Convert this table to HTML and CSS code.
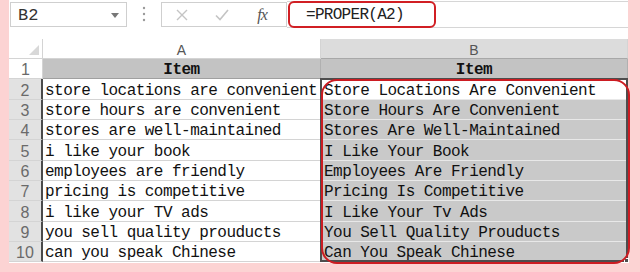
FILE: index.html
```html
<!DOCTYPE html>
<html>
<head>
<meta charset="utf-8">
<link rel="stylesheet" href="styles.css">
</head>
<body>
<div class="app">
  <div class="fbar">
    <div class="namebox"><span class="ref">B2</span><span class="caret"></span></div>
    <div class="sep">
      <svg width="4" height="16" viewBox="0 0 4 16"><circle cx="2" cy="2" r="1.2" fill="#9a9a9a"/><circle cx="2" cy="8" r="1.2" fill="#9a9a9a"/><circle cx="2" cy="14" r="1.2" fill="#9a9a9a"/></svg>
    </div>
    <div class="fnbox">
      <span class="ico"><svg width="12" height="12" viewBox="0 0 12 12"><path d="M1 1 L11 11 M11 1 L1 11" stroke="#c4c4c4" stroke-width="1.4" fill="none"/></svg></span>
      <span class="ico"><svg width="14" height="12" viewBox="0 0 14 12"><path d="M1 6.5 L5 10.5 L13 1" stroke="#c4c4c4" stroke-width="1.6" fill="none"/></svg></span>
      <span class="ico fx">fx</span>
    </div>
    <div class="finput">
      <div class="fring">=PROPER(A2)</div>
    </div>
  </div>
  <div class="sheet">
    <div class="corner"><span class="tri"></span></div>
    <div class="colh">A</div>
    <div class="colh sel">B</div>

    <div class="rh first">1</div>
    <div class="hd">Item</div>
    <div class="hd">Item</div>

    <div class="rh">2</div><div class="ca">store locations are convenient</div><div class="cb active">Store Locations Are Convenient</div>
    <div class="rh">3</div><div class="ca">store hours are convenient</div><div class="cb">Store Hours Are Convenient</div>
    <div class="rh">4</div><div class="ca">stores are well-maintained</div><div class="cb">Stores Are Well-Maintained</div>
    <div class="rh">5</div><div class="ca">i like your book</div><div class="cb">I Like Your Book</div>
    <div class="rh">6</div><div class="ca">employees are friendly</div><div class="cb">Employees Are Friendly</div>
    <div class="rh">7</div><div class="ca">pricing is competitive</div><div class="cb">Pricing Is Competitive</div>
    <div class="rh">8</div><div class="ca">i like your TV ads</div><div class="cb">I Like Your Tv Ads</div>
    <div class="rh">9</div><div class="ca">you sell quality prouducts</div><div class="cb">You Sell Quality Prouducts</div>
    <div class="rh">10</div><div class="ca">can you speak Chinese</div><div class="cb">Can You Speak Chinese</div>

    <div class="selbox"><span class="handle"></span></div>
    <div class="ring"></div>
  </div>
</div>
</body>
</html>
```
FILE: styles.css
```css
* { box-sizing: border-box; }
html, body { margin: 0; padding: 0; }
body {
  width: 640px;
  height: 272px;
  background: #fcd3d3;
  overflow: hidden;
  font-family: "Liberation Mono", monospace;
}
.app {
  margin-left: 9px;
  width: 619px;
  height: 263px;
  background: #ffffff;
}
.fbar {
  display: flex;
  align-items: flex-start;
  height: 28px;
}
.namebox {
  margin: 2px 0 0 1px;
  width: 117px;
  height: 25px;
  border: 1px solid #cfcfcf;
  display: flex;
  align-items: center;
  justify-content: space-between;
  padding: 0 7px 0 7px;
}
.ref {
  font-size: 17px;
  color: #333;
  padding-top: 1px;
}
.caret {
  width: 0;
  height: 0;
  border-left: 4px solid transparent;
  border-right: 4px solid transparent;
  border-top: 5px solid #777;
  margin-top: 1px;
}
.sep {
  width: 34px;
  height: 28px;
  display: flex;
  align-items: center;
  justify-content: center;
}
.fnbox {
  margin-top: 2px;
  width: 126px;
  height: 25px;
  border: 1px solid #cfcfcf;
  display: grid;
  grid-template-columns: 40px 40px 40px;
  align-items: center;
}
.ico {
  display: flex;
  justify-content: center;
  align-items: center;
  height: 23px;
}
.fx {
  font-family: "Liberation Serif", serif;
  font-style: italic;
  font-size: 16px;
  color: #555;
  letter-spacing: -1px;
}
.finput {
  flex: 1;
  height: 27px;
  margin-top: 1px;
  border-top: 1px solid #d6d6d6;
  border-bottom: 1px solid #d6d6d6;
  position: relative;
}
.fring {
  position: absolute;
  left: 1px;
  top: -1px;
  width: 148px;
  height: 27px;
  border: 2px solid #d11f24;
  border-radius: 6px;
  padding-left: 16px;
  padding-top: 1px;
  font-size: 16px;
  letter-spacing: -0.7px;
  line-height: 23px;
  color: #222;
}
.sheet {
  margin-top: 11px;
  position: relative;
  display: grid;
  grid-template-columns: 34px 278px 307px;
  grid-template-rows: 20px 20px 21px 20px 20px 21px 20px 20px 21px 20px 20px;
  font-size: 16px;
  letter-spacing: -0.53px;
  color: #111;
}
.sheet > div {
  border-right: 1px solid #d4d4d4;
  border-bottom: 1px solid #d4d4d4;
  white-space: nowrap;
  overflow: hidden;
  display: flex;
  align-items: center;
  padding-top: 3px;
}
.corner {
  position: relative;
  background: #fff;
}
.tri {
  position: absolute;
  right: 3px;
  bottom: 3px;
  width: 0;
  height: 0;
  border-left: 10px solid transparent;
  border-bottom: 10px solid #d8d8d8;
}
.colh {
  justify-content: center;
  font-family: "Liberation Sans", sans-serif;
  font-size: 14px;
  letter-spacing: 0;
  color: #555;
  background: #fff;
}
.colh.sel {
  background: #dcdcdc;
  border-bottom-color: #a8a8a8 !important;
}
.rh {
  justify-content: center;
  font-family: "Liberation Sans", sans-serif;
  font-size: 16px;
  letter-spacing: 0;
  color: #6a6a6a;
  background: #e2e2e2;
  border-right: 2px solid #4a4a4a !important;
}
.rh.first {
  background: #fff;
  border-right: 1px solid #d4d4d4 !important;
}
.hd {
  justify-content: center;
  background: #c3c3c3;
  font-weight: bold;
  color: #111;
  border-right-color: #b0b0b0 !important;
  border-bottom-color: #a0a0a0 !important;
}
.ca {
  padding-left: 2px;
  background: #fff;
}
.cb {
  padding-left: 3px;
  background: #c9c9c9;
  border-bottom-color: #e8e8e8 !important;
}
.cb.active {
  background: #fff;
}
.selbox {
  position: absolute;
  left: 311px;
  top: 39px;
  width: 308px;
  height: 184px;
  border: 2px solid #4d4d4d !important;
  background: transparent;
  pointer-events: none;
  overflow: visible !important;
  padding: 0 !important;
}
.handle {
  position: absolute;
  right: -3px;
  bottom: -3px;
  width: 5px;
  height: 5px;
  background: #4d4d4d;
  border: 1px solid #fff;
}
.ring {
  position: absolute;
  left: 312px;
  top: 40px;
  width: 309px;
  height: 185px;
  border: 2px solid #cc1c22 !important;
  border-radius: 16px;
  background: transparent;
  padding: 0 !important;
}
```
